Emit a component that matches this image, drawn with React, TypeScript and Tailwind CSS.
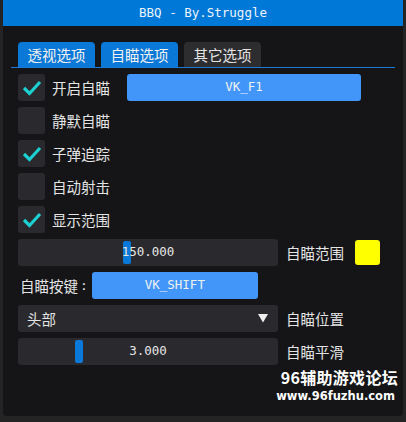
import React from "react";

const cjk = { fontFamily: '"Noto Sans CJK SC", "Noto Sans", sans-serif' };
const mono = { fontFamily: '"DejaVu Sans Mono", "Liberation Mono", monospace' };

function Check({ on, label }: { on: boolean; label: string }) {
  return (
    <div className="flex items-center h-[27px]">
      <div className="w-[27px] h-[27px] rounded-[3px] bg-[#2a2a2e] flex items-center justify-center">
        {on && (
          <svg width="22" height="22" viewBox="0 0 22 22">
            <polyline points="3,11 8.5,16.5 19,5" fill="none" stroke="#1ccfd0" strokeWidth="3.2" />
          </svg>
        )}
      </div>
      <span className="ml-[7px] text-[14.5px] text-[#e4e4e4]" style={cjk}>{label}</span>
    </div>
  );
}

function Slider({ value, grab }: { value: string; grab: number }) {
  return (
    <div className="relative w-[260px] h-[27px] rounded-[3px] bg-[#2a2a2e] flex items-center justify-center">
      <div className="absolute top-[2px] w-[8px] h-[23px] rounded-[2px] bg-[#0a78d6]" style={{ left: grab }} />
      <span className="relative text-[12.5px] text-[#e6e6e6]" style={mono}>{value}</span>
    </div>
  );
}

export default function App() {
  return (
    <div className="w-[406px] h-[422px] bg-[#242424] px-[3px] pb-[6px]">
      <div className="relative w-[400px] h-[416px] bg-[#151517] rounded-b-[4px] overflow-hidden">
        <div className="h-[26px] bg-[#0078d7] flex items-center justify-center text-[12.5px] text-[#eef4fb]" style={mono}>
          BBQ - By.Struggle
        </div>

        <div className="pt-[16px] px-[8px]">
          <div className="flex gap-[6px] pl-[7px] border-b border-[#1a7ad6]" style={cjk}>
            <div className="h-[25px] w-[77px] rounded-t-[4px] bg-[#0a78d6] text-[14.5px] text-[#f2f2f2] flex items-center justify-center">透视选项</div>
            <div className="h-[25px] w-[77px] rounded-t-[4px] bg-[#0a78d6] text-[14.5px] text-[#f2f2f2] flex items-center justify-center">自瞄选项</div>
            <div className="h-[25px] w-[77px] rounded-t-[4px] bg-[#2d2d30] text-[14.5px] text-[#e4e4e4] flex items-center justify-center">其它选项</div>
          </div>
        </div>

        <div className="pl-[15px] pt-[6px] flex flex-col gap-[6px]">
          <div className="flex items-center">
            <Check on label="开启自瞄" />
            <div className="ml-[17px] w-[234px] h-[27px] rounded-[3px] bg-[#4296fa] flex items-center justify-center text-[12.5px] text-[#f0f0f0]" style={mono}>
              VK_F1
            </div>
          </div>
          <Check on={false} label="静默自瞄" />
          <Check on label="子弹追踪" />
          <Check on={false} label="自动射击" />
          <Check on label="显示范围" />

          <div className="flex items-center">
            <Slider value="150.000" grab={105} />
            <span className="ml-[8px] text-[14.5px] text-[#e4e4e4]" style={cjk}>自瞄范围</span>
            <div className="ml-[11px] w-[25px] h-[25px] rounded-[3px] bg-[#ffff00]" />
          </div>

          <div className="flex items-center h-[27px]">
            <span className="ml-[2px] text-[14.5px] text-[#e4e4e4]" style={cjk}>自瞄按键</span>
            <span className="ml-[2px] text-[13px] text-[#e4e4e4]" style={mono}>:</span>
            <div className="ml-[4px] w-[166px] h-[27px] rounded-[3px] bg-[#4296fa] flex items-center justify-center text-[12.5px] text-[#f0f0f0]" style={mono}>
              VK_SHIFT
            </div>
          </div>

          <div className="flex items-center">
            <div className="w-[260px] h-[27px] rounded-[3px] bg-[#2a2a2e] flex items-center justify-between pl-[9px] pr-[10px]">
              <span className="text-[14.5px] text-[#e4e4e4]" style={cjk}>头部</span>
              <svg width="10" height="9" viewBox="0 0 10 9">
                <polygon points="0,0 10,0 5,8.5" fill="#f0f0f0" />
              </svg>
            </div>
            <span className="ml-[8px] text-[14.5px] text-[#e4e4e4]" style={cjk}>自瞄位置</span>
          </div>

          <div className="flex items-center">
            <Slider value="3.000" grab={57} />
            <span className="ml-[8px] text-[14.5px] text-[#e4e4e4]" style={cjk}>自瞄平滑</span>
          </div>
        </div>

        <div className="absolute right-[5px] top-[369px] flex flex-col items-end text-white font-bold leading-none" style={cjk}>
          <span className="text-[16px] tracking-[0.3px]">96辅助游戏论坛</span>
          <span className="mt-[6px] mr-[3px] text-[11.5px]" style={{ fontFamily: '"DejaVu Sans", sans-serif' }}>www.96fuzhu.com</span>
        </div>
      </div>
    </div>
  );
}
